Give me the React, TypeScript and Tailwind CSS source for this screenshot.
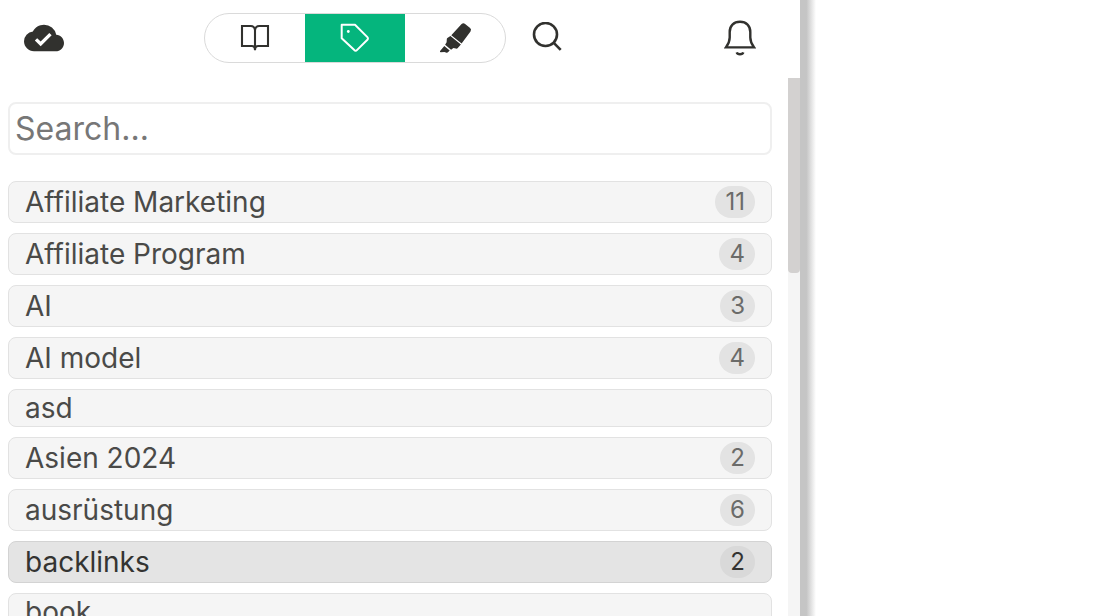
import { MdCloudDone } from "react-icons/md";

type Tag = { name: string; count?: number; active?: boolean };

const tags: Tag[] = [
  { name: "Affiliate Marketing", count: 11 },
  { name: "Affiliate Program", count: 4 },
  { name: "AI", count: 3 },
  { name: "AI model", count: 4 },
  { name: "asd" },
  { name: "Asien 2024", count: 2 },
  { name: "ausrüstung", count: 6 },
  { name: "backlinks", count: 2, active: true },
  { name: "book" },
];

function BookIcon() {
  return (
    <svg viewBox="0 0 30 28" className="h-7 w-[30px]" fill="none" stroke="currentColor" strokeWidth="2.100">
      <path d="M15 6.200C14.600 3.200 13.400 2 10.800 2H2v20h9.800c2 0 3.200 1 3.200 4.200 0-3.200 1.200-4.200 3.200-4.200H28V2h-8.800C16.600 2 15.400 3.200 15 6.200V26.200" />
    </svg>
  );
}

function TagIcon() {
  return (
    <svg viewBox="0 0 30 30" className="size-[30px]" fill="none" stroke="currentColor" strokeWidth="2" strokeLinejoin="round">
      <path d="M1.700 1.800h13.300L27.400 14.100a1.800 1.800 0 0 1 0 2.600L16.900 27.100a1.800 1.800 0 0 1-2.600 0L1.700 15.200z" />
      <circle cx="8.300" cy="8.500" r="1.400" fill="currentColor" stroke="none" />
    </svg>
  );
}

function MarkerIcon() {
  return (
    <svg viewBox="0 0 34 32" className="h-8 w-[34px]" fill="currentColor">
      <path d="M23.600 2.100q1.700-1.600 3.500-.1l5 4.100q1.700 1.500.4 3.300l-8.900 12.200L13.300 13.300z" />
      <path d="M12.400 14.100 22.900 22.500l-3.100 3.600q-.8.800-1.900.5l-2.500-.5-2.300 1.600-6-4.900 1.500-2.500.2-3.100q0-.7.600-1.200z" />
      <path d="m6.300 24 5.400 4.400-1.700 1.900q-.6.600-1.500.4l-2-.6-3.900.1q-1.200-.1-.5-1.100z" />
    </svg>
  );
}

function SearchIcon() {
  return (
    <svg viewBox="0 0 30 30" className="size-[30px]" fill="none" stroke="currentColor" strokeWidth="2.600">
      <circle cx="13.500" cy="12.500" r="11.500" />
      <path d="m21.500 20.600 7.200 7.300" />
    </svg>
  );
}

function BellIcon() {
  return (
    <svg viewBox="0 0 32 36" className="h-9 w-8" fill="none" stroke="currentColor" strokeWidth="2.400">
      <path d="M16 1.800C9.600 1.800 5.700 6 5.700 12v5.500c0 3.500-1.200 6.500-3.800 9.900h28.200c-2.600-3.400-3.800-6.400-3.800-9.900V12c0-6-3.900-10.200-10.300-10.200z" />
      <path d="M12.700 32.400c.8 2.500 5.800 2.500 6.600 0" />
    </svg>
  );
}

function Header() {
  return (
    <header className="flex h-[78px] shrink-0 items-start justify-between pt-[13px] pr-11 pl-6 text-[#31312e]">
      <button aria-label="Synced" className="flex h-[50px] items-center">
        <MdCloudDone className="size-10" />
      </button>
      <div className="flex">
        <nav className="flex h-[50px] overflow-hidden rounded-[25px] border border-[#dadada]">
          <button aria-label="Library" className="flex w-[100px] items-center justify-center">
            <BookIcon />
          </button>
          <button aria-label="Tags" aria-pressed="true" className="flex w-[100px] items-center justify-center bg-[#05b57d] text-white">
            <TagIcon />
          </button>
          <button aria-label="Highlights" className="flex w-[100px] items-center justify-center">
            <MarkerIcon />
          </button>
        </nav>
        <button aria-label="Search" className="flex h-12 items-center pr-[22px] pl-[26px]">
          <SearchIcon />
        </button>
      </div>
      <button aria-label="Notifications" className="flex h-[50px] items-center">
        <BellIcon />
      </button>
    </header>
  );
}

function TagRow({ tag }: { tag: Tag }) {
  return (
    <li>
      <button
        className={
          tag.active
            ? "flex w-full items-center justify-between rounded-lg border border-[#d3d3d3] bg-[#e4e4e4] px-4 py-1 text-left text-[#343432]"
            : "flex w-full items-center justify-between rounded-lg border border-[#e2e2e2] bg-[#f5f5f5] px-4 py-1 text-left text-[#4a4a48]"
        }
      >
        <span className="text-[28px] leading-7">{tag.name}</span>
        {tag.count !== undefined && (
          <span
            className={
              tag.active
                ? "rounded-full bg-[#d9d9d9] px-[10px] text-2xl leading-8 text-[#343432]"
                : "rounded-full bg-[#e3e3e3] px-[10px] text-2xl leading-8 text-[#6b6b69]"
            }
          >
            {tag.count}
          </span>
        )}
      </button>
    </li>
  );
}

export default function App() {
  return (
    <div className="flex h-screen overflow-hidden bg-white font-['Inter',sans-serif]">
      <aside className="flex w-full max-w-[800px] flex-col bg-white">
        <Header />
        <div className="flex min-h-0 flex-1">
          <main className="min-w-0 flex-1 overflow-hidden pt-6 pr-4 pl-2">
            <input
              type="text"
              aria-label="Search tags"
              placeholder="Search..."
              className="block h-[53px] w-full rounded-lg border-2 border-[#efefef] px-[5px] text-[32px] text-[#343432] outline-none placeholder:text-[#777777]"
            />
            <ul className="mt-[26px] flex flex-col gap-[10px]">
              {tags.map((tag) => (
                <TagRow key={tag.name} tag={tag} />
              ))}
            </ul>
          </main>
          <div aria-hidden="true" className="w-3 shrink-0 bg-[#f5f5f5]">
            <div className="h-[195px] rounded-b-[4px] bg-[#d3d1d0]" />
          </div>
        </div>
      </aside>
      <div aria-hidden="true" className="w-4 shrink-0 bg-linear-to-r from-[#c5c5c5] from-40% to-white" />
    </div>
  );
}
